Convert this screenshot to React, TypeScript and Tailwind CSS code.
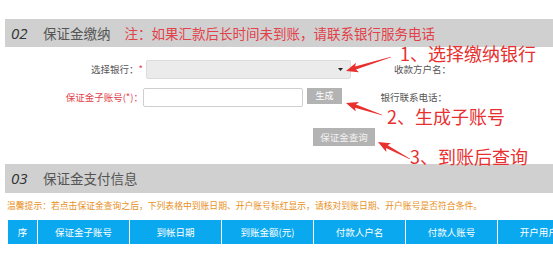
import React from "react";

type Pt = [number, number];

function arrowPoints(t: Pt, p: Pt, headLen = 12, headW = 10, w0 = 0.6, w1 = 3.2): string {
  const dx = p[0] - t[0];
  const dy = p[1] - t[1];
  const len = Math.hypot(dx, dy);
  const ux = dx / len;
  const uy = dy / len;
  const nx = -uy;
  const ny = ux;
  const bx = p[0] - ux * headLen;
  const by = p[1] - uy * headLen;
  const nb = (k: number): Pt => [bx + ux * 2 + nx * k, by + uy * 2 + ny * k];
  const pts: Pt[] = [
    [t[0] + nx * w0 / 2, t[1] + ny * w0 / 2],
    nb(w1 / 2),
    [bx + nx * headW / 2, by + ny * headW / 2],
    p,
    [bx - nx * headW / 2, by - ny * headW / 2],
    nb(-w1 / 2),
    [t[0] - nx * w0 / 2, t[1] - ny * w0 / 2],
  ];
  return pts.map((q) => `${q[0].toFixed(1)},${q[1].toFixed(1)}`).join(" ");
}

const cols = ["保证金子账号", "到帐日期", "到账金额(元)", "付款人户名", "付款人账号", "开户用户名"];

export default function App() {
  return (
    <div className="relative w-[553px] h-[253px] overflow-hidden bg-white font-['Noto_Sans_CJK_SC',sans-serif] text-[#555]">
      <div className="pt-[19px] pl-[5px]">
        {/* Section 02 header */}
        <div className="h-[28px] bg-[#d0d0d0] flex items-center">
          <span className="ml-[6px] w-[32px] text-[15px] italic text-[#333] font-['Open_Sans',sans-serif]">02</span>
          <span className="text-[13.5px] text-[#555]">保证金缴纳</span>
          <span className="ml-[14px] text-[13.5px] text-[#e2414a]">注：如果汇款后长时间未到账，请联系银行服务电话</span>
        </div>

        {/* Form rows */}
        <div className="mt-[13px] flex items-center h-[19px]">
          <div className="w-[138px] text-right text-[9.5px] text-[#555]">
            选择银行：<span className="text-[#e2414a]">*</span>
          </div>
          <div className="ml-[3px] w-[205px] h-[19px] bg-[#ebebeb] border border-[#dcdcdc] rounded-[2px] flex items-center justify-end pr-[7px]">
            <svg width="5" height="3" viewBox="0 0 5 3"><polygon points="0,0 5,0 2.5,3" fill="#222" /></svg>
          </div>
          <div className="w-[100px] text-right text-[9.5px] text-[#555]">收款方户名：</div>
        </div>

        <div className="mt-[9px] flex items-start h-[19px]">
          <div className="w-[138px] text-right text-[9.5px] text-[#e2414a] leading-[19px]">保证金子账号(*)：</div>
          <div className="w-[160px] h-[19px] bg-white border border-[#cfcfcf] rounded-[2px]" />
          <div className="ml-[4px] w-[35px] h-[16px] bg-[#b3b3b3] text-white text-[9px] flex items-center justify-center">生成</div>
          <div className="w-[105px] text-right text-[9.5px] text-[#555] leading-[19px]">银行联系电话：</div>
        </div>

        <div className="mt-[21px] flex">
          <div className="ml-[308px] w-[62px] h-[18px] bg-[#b3b3b3] text-[#f2f2f2] text-[9.5px] flex items-center justify-center">保证金查询</div>
        </div>

        {/* Section 03 header */}
        <div className="mt-[18px] h-[29px] bg-[#d0d0d0] flex items-center">
          <span className="ml-[6px] w-[32px] text-[15px] italic text-[#333] font-['Open_Sans',sans-serif]">03</span>
          <span className="text-[13.5px] text-[#555]">保证金支付信息</span>
        </div>

        <div className="mt-[4px] h-[18px] flex items-center pl-[2px] text-[8.8px] text-[#e8901c] whitespace-nowrap">
          温馨提示：若点击保证金查询之后，下列表格中到账日期、开户账号标红显示，请核对到账日期、开户账号是否符合条件。
        </div>

        <div className="mt-[5px] ml-[3px] h-[24px] flex bg-[#0aa9ef] text-white text-[9.5px] whitespace-nowrap">
          <div className="w-[30px] shrink-0 flex items-center justify-center border-r border-white">序</div>
          {cols.map((c) => (
            <div key={c} className="w-[92px] shrink-0 flex items-center justify-center border-r border-white">
              {c}
            </div>
          ))}
        </div>
      </div>

      {/* Annotations overlay */}
      <svg className="absolute left-0 top-0 pointer-events-none" width="553" height="253" viewBox="0 0 553 253">
        <polygon points={arrowPoints([391, 57], [346, 71])} fill="#e8302f" />
        <polygon points={arrowPoints([382, 115], [346, 103])} fill="#e8302f" />
        <polygon points={arrowPoints([410, 159], [378, 142])} fill="#e8302f" />
      </svg>
      <div className="absolute left-[400px] top-[43px] text-[18px] leading-[20px] text-[#e8302f] whitespace-nowrap">1、选择缴纳银行</div>
      <div className="absolute left-[387px] top-[106px] text-[18px] leading-[20px] text-[#e8302f] whitespace-nowrap">2、生成子账号</div>
      <div className="absolute left-[410px] top-[146px] text-[18px] leading-[20px] text-[#e8302f] whitespace-nowrap">3、到账后查询</div>
    </div>
  );
}
